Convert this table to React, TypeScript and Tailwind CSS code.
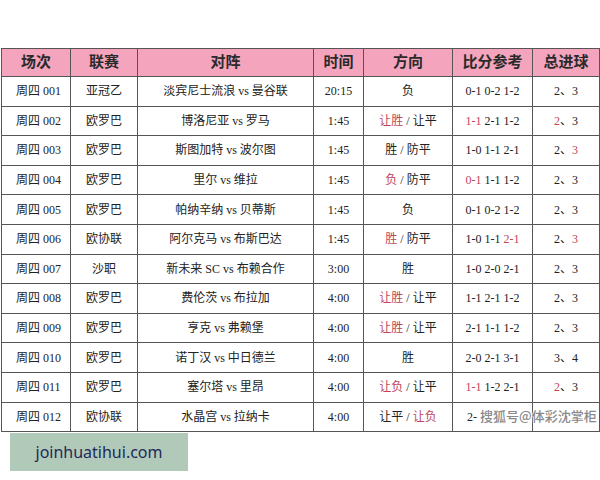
import React from "react";

type Seg = { t: string; r?: boolean };
type Row = {
  id: string;
  league: string;
  match: string;
  time: string;
  dir: Seg[];
  score: Seg[];
  goals: Seg[];
};

const S = (t: string, r?: boolean): Seg => ({ t, r });

const rows: Row[] = [
  { id: "周四 001", league: "亚冠乙", match: "淡宾尼士流浪 vs 曼谷联", time: "20:15", dir: [S("负")], score: [S("0-1 0-2 1-2")], goals: [S("2、3")] },
  { id: "周四 002", league: "欧罗巴", match: "博洛尼亚 vs 罗马", time: "1:45", dir: [S("让胜", true), S(" / 让平")], score: [S("1-1", true), S(" 2-1 1-2")], goals: [S("2", true), S("、3")] },
  { id: "周四 003", league: "欧罗巴", match: "斯图加特 vs 波尔图", time: "1:45", dir: [S("胜 / 防平")], score: [S("1-0 1-1 2-1")], goals: [S("2、"), S("3", true)] },
  { id: "周四 004", league: "欧罗巴", match: "里尔 vs 维拉", time: "1:45", dir: [S("负", true), S(" / 防平")], score: [S("0-1", true), S(" 1-1 1-2")], goals: [S("2、3")] },
  { id: "周四 005", league: "欧罗巴", match: "帕纳辛纳 vs 贝蒂斯", time: "1:45", dir: [S("负")], score: [S("0-1 0-2 1-2")], goals: [S("2、3")] },
  { id: "周四 006", league: "欧协联", match: "阿尔克马 vs 布斯巴达", time: "1:45", dir: [S("胜", true), S(" / 防平")], score: [S("1-0 1-1 "), S("2-1", true)], goals: [S("2、"), S("3", true)] },
  { id: "周四 007", league: "沙职", match: "新未来 SC vs 布赖合作", time: "3:00", dir: [S("胜")], score: [S("1-0 2-0 2-1")], goals: [S("2、3")] },
  { id: "周四 008", league: "欧罗巴", match: "费伦茨 vs 布拉加", time: "4:00", dir: [S("让胜", true), S(" / 让平")], score: [S("1-1 2-1 1-2")], goals: [S("2、3")] },
  { id: "周四 009", league: "欧罗巴", match: "亨克 vs 弗赖堡", time: "4:00", dir: [S("让胜", true), S(" / 让平")], score: [S("2-1 1-1 1-2")], goals: [S("2、3")] },
  { id: "周四 010", league: "欧罗巴", match: "诺丁汉 vs 中日德兰", time: "4:00", dir: [S("胜")], score: [S("2-0 2-1 3-1")], goals: [S("3、4")] },
  { id: "周四 011", league: "欧罗巴", match: "塞尔塔 vs 里昂", time: "4:00", dir: [S("让负", true), S(" / 让平")], score: [S("1-1", true), S(" 1-2 2-1")], goals: [S("2", true), S("、3")] },
  { id: "周四 012", league: "欧协联", match: "水晶宫 vs 拉纳卡", time: "4:00", dir: [S("让平 / "), S("让负", true)], score: [S("2-")], goals: [S("")] },
];

const headers = ["场次", "联赛", "对阵", "时间", "方向", "比分参考", "总进球"];
const widths = ["w-[69px]", "w-[67px]", "w-[176px]", "w-[50px]", "w-[89px]", "w-[80px]", "w-[67px]"];

function Segs({ s }: { s: Seg[] }) {
  return (
    <>
      {s.map((x, i) => (
        <span key={i} className={x.r ? "text-[#c0455a]" : ""} style={{ whiteSpace: "pre" }}>
          {x.t}
        </span>
      ))}
    </>
  );
}

export default function App() {
  const font = "font-['Liberation_Serif','Noto_Sans_CJK_SC',serif]";
  const cell = "border-[1.5px] border-[#555] p-0 leading-none";
  return (
    <div className={`relative w-[600px] h-[480px] bg-white ${font} text-[#222]`}>
      <div className="h-[48px]" />
      <table className="ml-[1px] w-[597px] border-collapse table-fixed">
        <colgroup>
          {widths.map((w, i) => (
            <col key={i} className={w} />
          ))}
        </colgroup>
        <thead>
          <tr className="h-[28px] bg-[#f4a4bc]">
            {headers.map((h) => (
              <th key={h} className={`${cell} text-[15px] font-bold text-[#2a2a2a]`}>
                {h}
              </th>
            ))}
          </tr>
        </thead>
        <tbody>
          {rows.map((r) => (
            <tr key={r.id} className="h-[29.6px] text-[12px]">
              <td className={`${cell} pl-[14px] text-left`}>{r.id}</td>
              <td className={`${cell} text-center`}>{r.league}</td>
              <td className={`${cell} text-center`}>{r.match}</td>
              <td className={`${cell} text-center`}>{r.time}</td>
              <td className={`${cell} text-center`}>
                <Segs s={r.dir} />
              </td>
              <td className={`${cell} ${r.score[0].t === "2-" ? "text-left pl-[14px]" : "text-center"}`}>
                <Segs s={r.score} />
              </td>
              <td className={`${cell} text-center`}>
                <Segs s={r.goals} />
              </td>
            </tr>
          ))}
        </tbody>
      </table>
      <div className="absolute left-[480px] top-[409px] whitespace-nowrap text-[13px] font-['Noto_Sans_CJK_SC',sans-serif] font-medium text-[#8a8a8a] leading-none [text-shadow:0_0_2px_#fff,0_0_2px_#fff,0_0_1px_#fff]">
        搜狐号@体彩沈掌柜
      </div>
      <div className="ml-[10px] mt-[1px] w-[178px] h-[38px] bg-[#b1c9b9] flex items-center justify-center">
        <span className="font-['Noto_Sans',sans-serif] text-[16px] text-[#1e2a5a]">joinhuatihui.com</span>
      </div>
    </div>
  );
}
